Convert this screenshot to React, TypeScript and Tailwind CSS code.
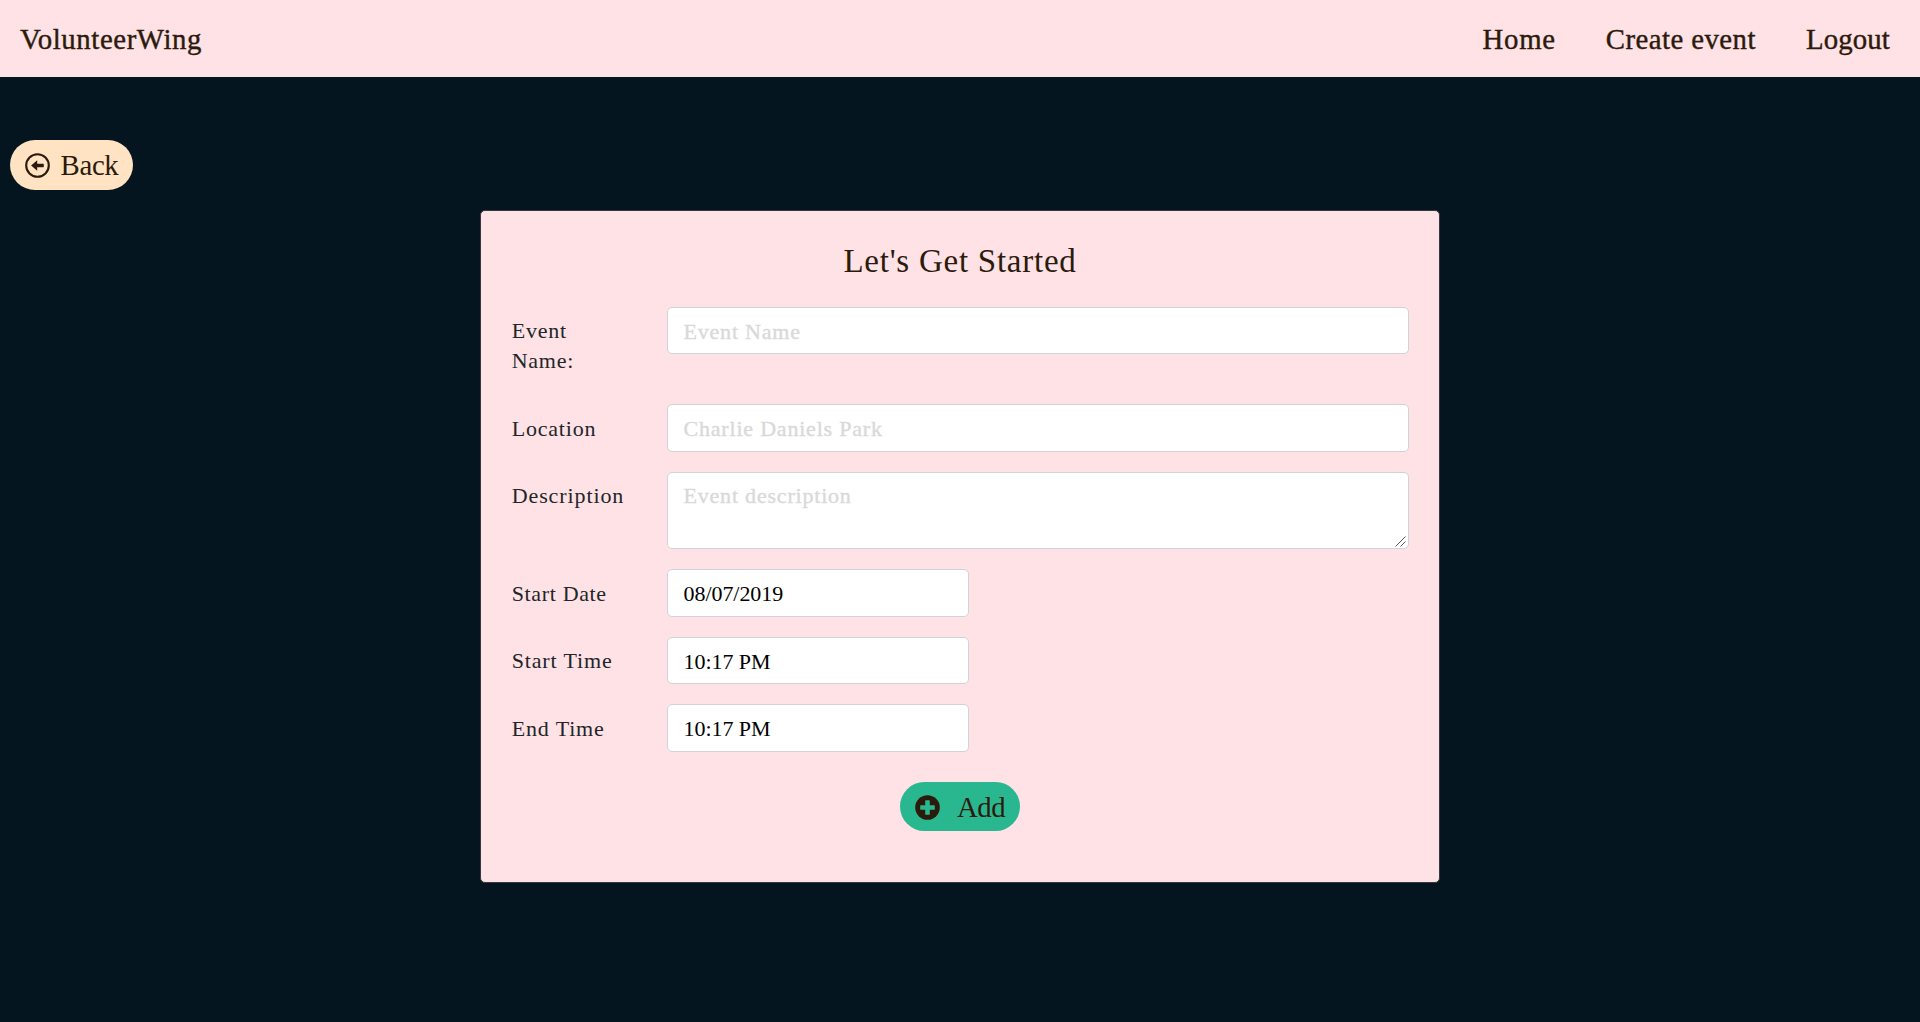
import React from "react";

const field =
  "block border border-[#ced4da] rounded-[5px] bg-white px-[15.5px] text-[22px] text-black placeholder:text-[#d9d9d9] placeholder:opacity-100 placeholder:[-webkit-text-stroke:0.35px_#d9d9d9] placeholder:tracking-[0.8px] tracking-[-0.05px] outline-none";

function Row({ label, labelClass, children }: { label: string; labelClass: string; children: React.ReactNode }) {
  return (
    <div className="mb-5 flex items-start">
      <label className={`w-[156px] shrink-0 pl-[0.7px] pt-[9.5px] pb-[8px] text-[22px] leading-[30px] text-[#212529] ${labelClass}`}>
        {label}
      </label>
      {children}
    </div>
  );
}

export default function App() {
  return (
    <div className="h-[1022px] overflow-hidden bg-[#04151f] font-['Liberation_Serif',serif] text-[#2c1a0d]">
      <nav className="flex h-[77px] items-center justify-between bg-[#ffe2e5] pl-5 pr-[30px] pt-[3px] text-[28.8px] [-webkit-text-stroke:0.4px_#2c1a0d]">
        <span className="tracking-[0.6px]">VolunteerWing</span>
        <div className="flex gap-[50px]">
          <span className="tracking-[0.7px]">Home</span>
          <span className="tracking-[0.45px]">Create event</span>
          <span className="tracking-[0.15px]">Logout</span>
        </div>
      </nav>

      <button className="ml-[10px] mt-[63px] flex h-[50px] w-[123px] items-center rounded-full bg-[#ffe3c2] pl-[15px] text-[28.8px]">
        <svg width="25" height="25" viewBox="0 0 25 25" className="mt-px shrink-0">
          <circle cx="12.5" cy="12.5" r="11.3" fill="none" stroke="currentColor" strokeWidth="2.1" />
          <path d="M6.1 12.5 12.2 7.3v3.5h6q.6 0 .6.6v2.2q0 .6-.6.6h-6v3.5z" fill="currentColor" />
        </svg>
        <span className="ml-[10.5px] pt-[2px] tracking-[-0.3px]">Back</span>
      </button>

      <main className="mx-auto mt-5 h-[673px] w-[960px] rounded-[5px] border border-[#37373f] bg-[#ffe2e5] px-[30px]">
        <h1 className="mt-[30px] text-center text-[33px] leading-[40px] tracking-[0.75px]">Let's Get Started</h1>
        <form className="mt-[25.75px]">
          <Row label="Event Name:" labelClass="pr-[60px] tracking-[0.75px]">
            <input className={`${field} h-[47.5px] w-[742px] pt-[2px]`} placeholder="Event Name" />
          </Row>
          <Row label="Location" labelClass="tracking-[0.8px]">
            <input className={`${field} h-[47.5px] w-[742px] pt-[2px]`} placeholder="Charlie Daniels Park" />
          </Row>
          <Row label="Description" labelClass="tracking-[0.9px]">
            <div className="relative">
              <textarea
                className={`${field} h-[77.5px] w-[742px] resize-none pt-[8.5px] leading-[30px]`}
                placeholder="Event description"
              />
              <svg width="11" height="11" viewBox="0 0 11 11" className="pointer-events-none absolute bottom-[2px] right-[3.5px]">
                <path d="M.5 10.5l10-10M5.5 10.5l5-5" stroke="#55555c" strokeWidth="1" />
              </svg>
            </div>
          </Row>
          <Row label="Start Date" labelClass="tracking-[0.65px]">
            <input className={`${field} h-[47.5px] w-[302px] pt-[2px]`} defaultValue="08/07/2019" />
          </Row>
          <Row label="Start Time" labelClass="tracking-[0.85px]">
            <input className={`${field} h-[47.5px] w-[302px] pt-[2px]`} defaultValue="10:17 PM" />
          </Row>
          <Row label="End Time" labelClass="tracking-[0.85px]">
            <input className={`${field} h-[47.5px] w-[302px] pt-[2px]`} defaultValue="10:17 PM" />
          </Row>
          <button type="button" className="mx-auto mt-[30.25px] flex h-[49px] w-[120px] items-center rounded-full bg-[#29b78f] pl-[15px] text-[28.8px]">
            <svg width="25" height="25" viewBox="0 0 25 25" className="mt-[2px] shrink-0">
              <circle cx="12.5" cy="12.5" r="12.3" fill="currentColor" />
              <path d="M10.8 5.2h3.4q.6 0 .6.6v4.4h4.4q.6 0 .6.6v3.4q0 .6-.6.6h-4.4v4.4q0 .6-.6.6h-3.4q-.6 0-.6-.6v-4.4H5.8q-.6 0-.6-.6v-3.4q0-.6.6-.6h4.4V5.8q0-.6.6-.6z" fill="#29b78f" />
            </svg>
            <span className="ml-[17px] pt-[2px] tracking-[-0.5px]">Add</span>
          </button>
        </form>
      </main>
    </div>
  );
}
